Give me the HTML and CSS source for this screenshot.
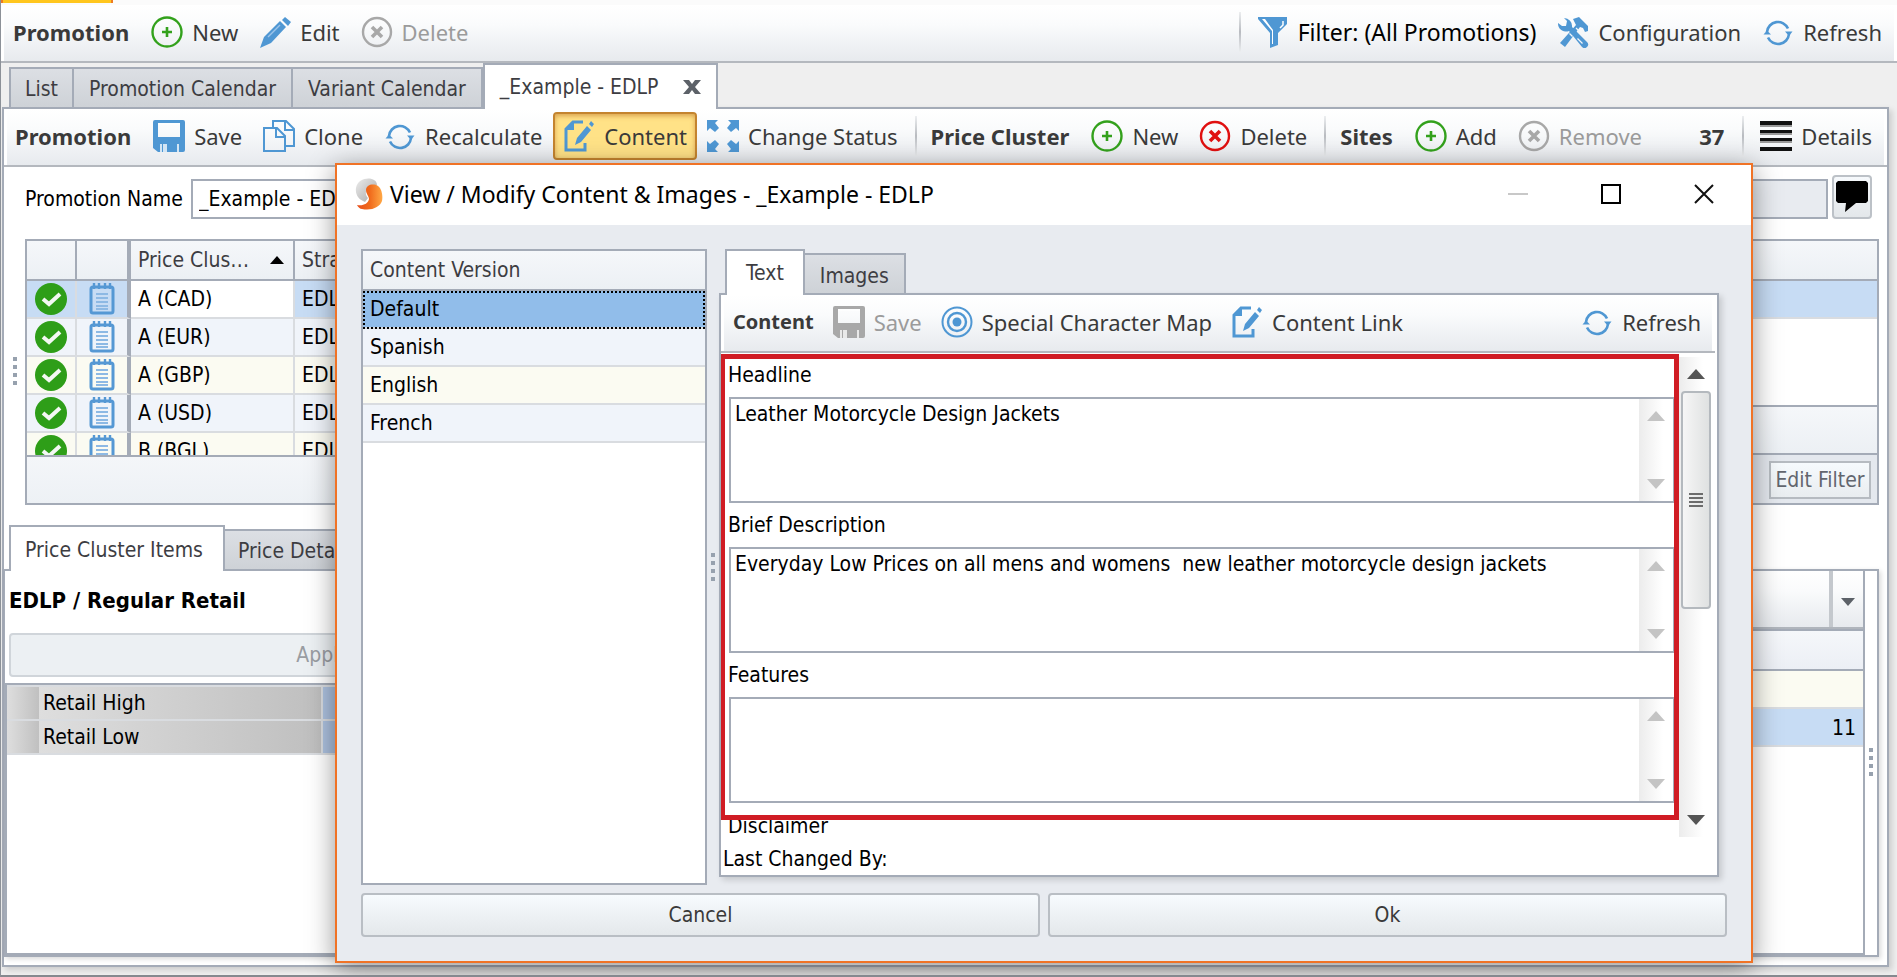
FILE: index.html
```html
<!DOCTYPE html>
<html lang="en">
<head>
<meta charset="utf-8">
<title>Promotion</title>
<link rel="stylesheet" href="styles.css">
</head>
<body>
<svg class="defs" aria-hidden="true">
  <symbol id="plus" viewBox="0 0 32 32"><circle cx="16" cy="16" r="14.5" fill="none" stroke="currentColor" stroke-width="2.4"/><path d="M16 11v10M11 16h10" stroke="currentColor" stroke-width="2.6"/></symbol>
  <symbol id="cross" viewBox="0 0 32 32"><circle cx="16" cy="16" r="14" fill="none" stroke="currentColor" stroke-width="2.4"/><path d="M11 11l10 10M21 11L11 21" stroke="currentColor" stroke-width="3.6"/></symbol>
  <symbol id="pencil" viewBox="0 0 32 32"><path d="M21 5l6 6-15 16-11 5 4-11z" fill="currentColor"/><path d="M9 21L21 9" stroke="#9cc4ea" stroke-width="1.4"/><path d="M23 4l3-3 6 5-3 4z" fill="currentColor"/></symbol>
  <symbol id="save" viewBox="0 0 32 32"><path fill-rule="evenodd" d="M2 0h28a2 2 0 0 1 2 2v28a2 2 0 0 1-2 2H5l-5-4V2a2 2 0 0 1 2-2zM5 3v14h22V3z" fill="currentColor"/><path d="M5 3h22v2H5z" fill="#fff" opacity=".5"/><path d="M7 24h2v8H7zM10 24h4v8h-4zM24 24h2v8h-2z" fill="#fff" opacity=".75"/></symbol>
  <symbol id="clone" viewBox="0 0 32 32"><path d="M10 8V1h13l8 8v17h-8M22 1v9h9" fill="none" stroke="currentColor" stroke-width="2"/><path d="M1 8h13l8 8v15H1zM13 8v9h9" fill="none" stroke="currentColor" stroke-width="2"/></symbol>
  <symbol id="refresh" viewBox="0 0 32 32"><path d="M5 16A11 11 0 0 1 26 12.500M27 18A11 11 0 0 1 6 21.500" fill="none" stroke="currentColor" stroke-width="2.600"/><path d="M1.500 18.500L5 14.500l4 4zM23 15.500l4 4.500 3.500-4.500z" fill="currentColor"/></symbol>
  <symbol id="compose" viewBox="0 0 32 32"><path d="M20 2H10L3 9v21h19v-7" fill="none" stroke="currentColor" stroke-width="3"/><path d="M3 10l8-8v8z" fill="currentColor"/><path d="M24 6l4 4-10 12-6 3 2-7zM26 4l2-3 3 3-2 3z" fill="currentColor"/></symbol>
  <symbol id="expand" viewBox="0 0 32 32"><path d="M0 0h11L8 3l4 5-4 4-5-4-3 3zM32 0v11l-3-3-5 4-4-4 4-5-3-3zM0 32V21l3 3 5-4 4 4-4 5 3 3zM32 32H21l3-3-4-5 4-4 5 4 3-3z" fill="currentColor"/></symbol>
  <symbol id="funnel" viewBox="0 0 32 32"><path d="M1 1h29v7l-9 9v12l-8 3V17L1 3z" fill="currentColor"/><path d="M5 3h3l8 11v14h-1V15z" fill="#fff"/><path d="M26 5v4l-3 3" fill="none" stroke="#fff" stroke-width="1.500"/></symbol>
  <symbol id="tools" viewBox="0 0 32 32"><path d="M1 7l4 3h4l1-5-3-3a8 8 0 0 1 8 9l15 15a3 3 0 0 1-5 5L12 15A8 8 0 0 1 1 7z" fill="currentColor"/><path d="M16 3l6-2 9 9v5l-3 1-2-4-3-1L8 31l-5-4L19 9z" fill="currentColor"/><path d="M12.500 17.500l3 3M19 12l2.500 2.500M20.500 22.500l5 5" stroke="#f3f6f9" stroke-width="1.300"/></symbol>
  <symbol id="bars" viewBox="0 0 32 32"><path d="M0 1h32v4H0zM0 10h32v3H0zM0 18h32v3H0zM0 27h32v4H0z" fill="#111"/><path d="M0 5h32v2H0zM0 13h32v2H0zM0 21h32v2H0z" fill="#999"/></symbol>
  <symbol id="target" viewBox="0 0 32 32"><g fill="none" stroke="currentColor"><circle cx="16" cy="16" r="14.500" stroke-width="2"/><circle cx="16" cy="16" r="9" stroke-width="2.400"/></g><circle cx="16" cy="16" r="4.500" fill="currentColor"/></symbol>
  <symbol id="check" viewBox="0 0 32 32"><circle cx="16" cy="16" r="16" fill="#2e9e18"/><path d="M8 16l6 5L25 11" fill="none" stroke="#f4f8f4" stroke-width="4"/></symbol>
  <symbol id="note" viewBox="0 0 32 32"><rect x="5" y="4" width="22" height="26" rx="2" fill="none" stroke="#5598d4" stroke-width="3"/><path d="M8 0v6M13 0v6M19 0v6M24 0v6" stroke="#5598d4" stroke-width="2.400"/><path d="M10 11h12M10 15h12M10 19h12M10 23h12M10 26h12" stroke="#8db9e4" stroke-width="2"/></symbol>
  <symbol id="up" viewBox="0 0 18 10"><path d="M9 0l9 10H0z" fill="currentColor"/></symbol>
  <symbol id="down" viewBox="0 0 18 10"><path d="M9 10L0 0h18z" fill="currentColor"/></symbol>
</svg>

<div class="ribbon"><span class="ribbon-tab"></span></div>

<header class="toolbar">
  <strong>Promotion</strong>
  <button class="tool"><svg class="green"><use href="#plus"/></svg>New</button>
  <button class="tool"><svg><use href="#pencil"/></svg>Edit</button>
  <button class="tool" disabled><svg><use href="#cross"/></svg>Delete</button>
  <span class="spacer"></span>
  <span class="sep"></span>
  <button class="tool filter"><svg><use href="#funnel"/></svg>Filter: (All Promotions)</button>
  <button class="tool"><svg><use href="#tools"/></svg>Configuration</button>
  <button class="tool"><svg><use href="#refresh"/></svg>Refresh</button>
</header>

<nav class="tabs main-tabs">
  <button class="tab">List</button>
  <button class="tab">Promotion Calendar</button>
  <button class="tab">Variant Calendar</button>
  <button class="tab active">_Example - EDLP <svg class="tab-close" viewBox="0 0 18 14"><path d="M0 0h6l3 4 3-4h6l-6 7 6 7h-6l-3-4-3 4H0l6-7z" fill="#5c6168"/></svg></button>
</nav>

<main class="page">
  <div class="toolbar">
    <strong>Promotion</strong>
    <button class="tool"><svg><use href="#save"/></svg>Save</button>
    <button class="tool"><svg><use href="#clone"/></svg>Clone</button>
    <button class="tool"><svg><use href="#refresh"/></svg>Recalculate</button>
    <button class="tool pressed"><svg><use href="#compose"/></svg>Content</button>
    <button class="tool"><svg><use href="#expand"/></svg>Change Status</button>
    <span class="sep"></span>
    <strong>Price Cluster</strong>
    <button class="tool"><svg class="green"><use href="#plus"/></svg>New</button>
    <button class="tool"><svg class="red"><use href="#cross"/></svg>Delete</button>
    <span class="sep"></span>
    <strong>Sites</strong>
    <button class="tool"><svg class="green"><use href="#plus"/></svg>Add</button>
    <button class="tool" disabled><svg><use href="#cross"/></svg>Remove</button>
    <span class="spacer"></span>
    <strong>37</strong>
    <span class="sep"></span>
    <button class="tool"><svg><use href="#bars"/></svg>Details</button>
  </div>

  <div class="name-row">
    <label for="promo-name">Promotion Name</label>
    <input id="promo-name" value="_Example - EDLP">
    <input class="readonly" aria-label="Comment" readonly>
    <button class="comment" aria-label="Comments"><svg viewBox="0 0 32 32"><path d="M2 0h28l2 2v18l-2 2H20L9 31l1-9H2l-2-2V2z"/></svg></button>
  </div>

  <section class="clusters">
    <span class="grip"><i></i><i></i><i></i><i></i></span>
    <div class="cluster-grid">
      <div class="grid-left">
        <div class="rows">
          <table>
            <thead><tr><th class="c1"></th><th class="c2"></th><th class="c3"><span>Price Clus…<svg class="sort"><use href="#up"/></svg></span></th><th>Strategy</th></tr></thead>
            <tbody>
              <tr class="selected"><td class="c1"><svg><use href="#check"/></svg></td><td class="c2"><svg><use href="#note"/></svg></td><td class="c3">A (CAD)</td><td>EDLP</td></tr>
              <tr><td class="c1"><svg><use href="#check"/></svg></td><td class="c2"><svg><use href="#note"/></svg></td><td class="c3">A (EUR)</td><td>EDLP</td></tr>
              <tr><td class="c1"><svg><use href="#check"/></svg></td><td class="c2"><svg><use href="#note"/></svg></td><td class="c3">A (GBP)</td><td>EDLP</td></tr>
              <tr><td class="c1"><svg><use href="#check"/></svg></td><td class="c2"><svg><use href="#note"/></svg></td><td class="c3">A (USD)</td><td>EDLP</td></tr>
              <tr><td class="c1"><svg><use href="#check"/></svg></td><td class="c2"><svg><use href="#note"/></svg></td><td class="c3">B (BGL)</td><td>EDLP</td></tr>
            </tbody>
          </table>
        </div>
        <div class="grid-foot"></div>
      </div>
      <div class="grid-right">
        <div class="g-head"></div>
        <div class="g-selected"></div>
        <div class="g-body"></div>
        <div class="g-summary"></div>
        <div class="g-filter"><button>Edit Filter</button></div>
      </div>
    </div>
  </section>

  <nav class="tabs detail-tabs">
    <button class="tab active">Price Cluster Items</button>
    <button class="tab">Price Details</button>
  </nav>

  <section class="details">
    <div class="retail">
      <h2>EDLP / Regular Retail</h2>
      <button class="apply" disabled>Apply</button>
      <div class="props">
        <div class="prop"><i></i><span>Retail High</span><b></b></div>
        <div class="prop"><i></i><span>Retail Low</span><b></b></div>
      </div>
    </div>
    <div class="items">
      <div class="items-grid">
        <div class="items-bar"><span></span><button aria-label="More"><svg><use href="#down"/></svg></button></div>
        <div class="items-head"></div>
        <div class="items-cream"></div>
        <div class="items-value">11</div>
      </div>
      <span class="grip"><i></i><i></i><i></i><i></i></span>
    </div>
  </section>
</main>

<div class="dialog" role="dialog" aria-labelledby="dialog-title">
  <div class="titlebar">
    <svg class="logo" viewBox="0 0 28 32"><defs><linearGradient id="lg" x1="0" y1="0" x2="1" y2="1"><stop offset="0" stop-color="#ececec"/><stop offset="1" stop-color="#a8a8a8"/></linearGradient><linearGradient id="lo" x1="0" y1="0" x2="1" y2="0"><stop offset="0" stop-color="#e8501c"/><stop offset=".5" stop-color="#f06a1c"/><stop offset="1" stop-color="#ffa845"/></linearGradient></defs><path d="M22 7C22-2 3-2 1 10c-1 7 3 12 9 14l3-4c-4-4-2-10 2-13z" fill="url(#lg)"/><path d="M11 12c0-5 7-7 12-4 4 3 5 10 4 15-2 6-10 10-20 8-2 0-4-2-5-4 6 1 11-1 12-6 0-3-3-5-3-9z" fill="url(#lo)"/></svg>
    <h1 id="dialog-title">View / Modify Content &amp; Images - _Example - EDLP</h1>
    <button aria-label="Minimize" disabled><svg viewBox="0 0 20 20"><path d="M0 10h20" stroke="#c8c8c8" stroke-width="2"/></svg></button>
    <button aria-label="Maximize"><svg viewBox="0 0 20 20"><path d="M1 1h18v18H1z" fill="none" stroke="#000" stroke-width="2"/></svg></button>
    <button aria-label="Close"><svg viewBox="0 0 20 20"><path d="M1 1l18 18M19 1L1 19" stroke="#111" stroke-width="2"/></svg></button>
  </div>
  <div class="dialog-body">
    <div class="split">
      <div class="versions">
        <table>
          <thead><tr><th>Content Version</th></tr></thead>
          <tbody>
            <tr class="current"><td>Default</td></tr>
            <tr><td>Spanish</td></tr>
            <tr class="cream"><td>English</td></tr>
            <tr><td>French</td></tr>
          </tbody>
        </table>
      </div>
      <span class="grip"><i></i><i></i><i></i><i></i></span>
      <div class="editor">
        <nav class="tabs editor-tabs">
          <button class="tab active">Text</button>
          <button class="tab">Images</button>
        </nav>
        <div class="editor-panel">
          <div class="toolbar">
            <strong>Content</strong>
            <button class="tool" disabled><svg><use href="#save"/></svg>Save</button>
            <button class="tool"><svg><use href="#target"/></svg>Special Character Map</button>
            <button class="tool"><svg><use href="#compose"/></svg>Content Link</button>
            <span class="spacer"></span>
            <button class="tool"><svg><use href="#refresh"/></svg>Refresh</button>
          </div>
          <div class="scroll-area">
            <div class="fields">
              <div class="marked">
                <label for="f1">Headline</label>
                <div class="memo"><textarea id="f1">Leather Motorcycle Design Jackets</textarea><span class="bar"><svg><use href="#up"/></svg><svg><use href="#down"/></svg></span></div>
                <label for="f2">Brief Description</label>
                <div class="memo"><textarea id="f2">Everyday Low Prices on all mens and womens  new leather motorcycle design jackets</textarea><span class="bar"><svg><use href="#up"/></svg><svg><use href="#down"/></svg></span></div>
                <label for="f3">Features</label>
                <div class="memo"><textarea id="f3"></textarea><span class="bar"><svg><use href="#up"/></svg><svg><use href="#down"/></svg></span></div>
              </div>
              <p class="next">Disclaimer</p>
            </div>
            <div class="bar outer"><svg><use href="#up"/></svg><span class="thumb"><i></i><i></i><i></i><i></i></span><svg><use href="#down"/></svg></div>
          </div>
          <p class="changed">Last Changed By:</p>
        </div>
      </div>
    </div>
    <div class="actions">
      <button>Cancel</button>
      <button>Ok</button>
    </div>
  </div>
</div>
</body>
</html>
```
FILE: styles.css
```css
* { box-sizing: border-box; }
:root {
  --line: #a4abb7;
  --soft: #d9dce0;
  --blue: #4f97d3;
  --row: #f0f4fa;
  --cream: #fbfbf2;
  --pick: #c7dcf4;
  --ui: "DejaVu Sans Condensed", "DejaVu Sans", sans-serif;
  --bar: "Noto Sans", "Open Sans", sans-serif;
}
html, body { height: 100%; }
body {
  margin: 0;
  position: relative;
  display: flex;
  flex-direction: column;
  overflow: hidden;
  background: #efefef;
  border-left: 1px solid #8c9198;
  border-bottom: 2px solid #85898f;
  font: 21px/26px var(--ui);
  color: #000;
}
button, input, textarea { font: inherit; color: inherit; margin: 0; }
button { background: none; border: 0; padding: 0; }
.defs { position: absolute; width: 0; height: 0; }
table { border-collapse: separate; border-spacing: 0; }

.ribbon { flex: none; height: 5px; background: #fbfbfb; }
.ribbon-tab { display: block; width: 112px; height: 3px; background: #ffc61e; border: solid #ee7b22; border-width: 0 2px; }

.toolbar {
  flex: none;
  display: flex;
  align-items: center;
  height: 58px;
  border: solid #b4b8be;
  border-width: 0 0 2px;
  background: linear-gradient(#fff 0%, #fafbfc 35%, #e7eaee 100%);
  box-shadow: inset 3px 0 #fff, inset -3px 0 #fff;
  font-family: var(--bar);
  font-size: 22px;
  line-height: 30px;
  color: #3a3a3a;
  padding: 0 4px 2px;
  white-space: nowrap;
}
.toolbar strong { padding: 0 12px 0 8px; font-weight: 700; }
.tool { display: flex; align-items: center; gap: 9px; height: 48px; padding: 0 11px 0 10px; }
.tool svg { width: 32px; height: 32px; color: var(--blue); }
.tool svg.green { color: #33a11c; }
.tool svg.red { color: #e01010; }
.tool:disabled { color: #9b9b9b; }
.tool:disabled svg { color: #a8a8a8; }
.tool.filter { color: #000; font-size: 23px; }
.tool.pressed { border: 2px solid #c4842f; border-radius: 4px; background: #ffe287; box-shadow: inset 0 2px 5px #d9a24f; padding: 0 8px; }
.spacer { flex: 1; }
.sep { width: 2px; height: 40px; margin: 0 6px; background: linear-gradient(#eceef0, #b8bbc0, #eceef0); }

.tabs { flex: none; display: flex; align-items: flex-end; color: #3d3d42; }
.tab {
  color: inherit;
  height: 42px;
  padding: 2px 14px 0;
  border: 2px solid var(--line);
  background: linear-gradient(#dcdfe4, #ced2d7);
}
.tab + .tab { border-left-width: 0; padding: 2px 15px 0; }
.tab.active { background: #fff; border-bottom: 0; height: 46px; }
.main-tabs { padding-left: 8px; height: 46px; position: relative; }
.main-tabs .tab.active { border-left-width: 2px; display: flex; align-items: center; padding-top: 0; }
.tab-close { width: 18px; height: 14px; margin-left: 25px; }

.page {
  flex: 1;
  min-height: 0;
  display: flex;
  flex-direction: column;
  margin: -2px 8px 8px 1px;
  border: 2px solid var(--line);
  background: #fff;
  box-shadow: 3px 3px 6px rgba(0, 0, 0, .15);
}
.page > .toolbar { padding-left: 3px; }

.name-row { display: flex; align-items: flex-end; padding: 8px 15px 8px 21px; height: 60px; gap: 4px; }
.name-row label { width: 162px; line-height: 40px; white-space: nowrap; }
.name-row input { flex: 1; min-width: 0; height: 40px; border: 2px solid var(--line); padding: 0 6px; background: #fff; }
.name-row .readonly { background: #e8ebf0; }
.comment { width: 40px; height: 44px; border: 2px solid #bcc1c7; border-radius: 4px; background: linear-gradient(#f6f9fc, #e3e7ea); display: grid; place-items: center; }
.comment svg { width: 34px; height: 32px; }

.grip { display: flex; flex-direction: column; justify-content: center; align-items: center; gap: 4px; }
.grip i { width: 4px; height: 4px; background: #97a1ae; }
.clusters { flex: none; display: flex; padding: 12px 8px 0 0; height: 278px; }
.clusters .grip { width: 21px; padding-bottom: 2px; }
.cluster-grid { flex: 1; display: flex; border: 2px solid var(--line); min-width: 0; }
.grid-left, .grid-right { flex: 1; display: flex; flex-direction: column; min-width: 0; }
.rows { height: 214px; overflow: hidden; }
.rows table { width: 100%; table-layout: fixed; }
.rows th, .rows td { text-align: left; font-weight: 400; white-space: nowrap; padding: 0 7px; border: solid var(--soft); border-width: 0 2px 2px 0; height: 38px; }
.rows th { height: 40px; border-color: var(--line); background: linear-gradient(#f5f7fa, #ecf0f4); color: #3d3d42; }
.rows .c1 { width: 50px; text-align: center; padding: 0; }
.rows .c2 { width: 54px; text-align: center; padding: 0; border-right: 4px solid var(--line); }
.rows .c3 { width: 164px; }
.rows th span { display: flex; align-items: center; justify-content: space-between; }
.rows td svg { width: 32px; height: 32px; display: block; margin: 0 auto; }
.rows .sort { width: 14px; height: 8px; margin-right: 2px; color: #000; }
.rows tr:nth-child(even) td { background: var(--row); }
.rows tr:nth-child(odd) td { background: var(--cream); }
.rows tr.selected td { background: var(--pick); }
.rows tr.selected .c3 { background: #fff; }
.grid-foot { flex: 1; border-top: 2px solid var(--line); background: linear-gradient(#f4f6f9, #edf1f5); }
.g-head { height: 38px; background: linear-gradient(#f5f7fa, #ecf0f4); }
.g-selected { height: 40px; border: solid var(--line); border-width: 2px 0 0; background: var(--pick); border-bottom: 2px solid var(--soft); }
.g-body { flex: 1; }
.g-summary { height: 50px; border: solid var(--line); border-width: 2px 0; background: linear-gradient(#f5f7fa, #ecf0f4); }
.g-filter { height: 48px; background: #e4e8ee; display: flex; justify-content: flex-end; align-items: center; padding: 2px 6px 0 0; }
.g-filter button { height: 38px; width: 102px; border: 2px solid #b6bbc1; background: linear-gradient(#f6fafd, #e9edf0); color: #62666e; white-space: nowrap; display: flex; justify-content: center; align-items: center; }

.detail-tabs { margin-top: 20px; padding-left: 5px; position: relative; }
.detail-tabs .tab.active { width: 216px; text-align: left; }
.detail-tabs .tab + .tab { padding-left: 13px; }
.details { flex: 1; min-height: 0; display: flex; justify-content: space-between; margin: -2px 8px 8px 0; border: 2px solid var(--line); border-left-width: 1px; box-shadow: 2px 2px 5px rgba(0, 0, 0, .15); }
.retail { width: 50%; display: flex; flex-direction: column; }
h2 { margin: 16px 0 18px 4px; font: 700 22px/28px var(--ui); }
.apply { margin-left: 4px; width: 628px; height: 44px; flex: none; border: 2px solid #d0d5da; border-radius: 4px; background: #ecf0f3; color: #9a9da2; }
.props { flex: 1; margin-top: 6px; border: solid var(--line); border-width: 2px 0 2px 2px; }
.prop { display: grid; grid-template-columns: 32px 282px 1fr; height: 34px; border-top: 2px solid var(--soft); }
.prop:last-child { height: 36px; border-bottom: 2px solid var(--soft); }
.prop i { background: linear-gradient(90deg, #dedede, #c0c0c0); }
.prop span { padding: 3px 4px 0; background: linear-gradient(90deg, #dedede, #bfbfbf); }
.prop b { border-left: 2px solid var(--soft); background: #adc2e0; }
.items { flex: 1; display: flex; }
.items-grid { flex: 1; border: solid var(--line); border-width: 0 2px 2px 0; }
.items .grip { width: 12px; padding-bottom: 2px; }
.items-bar { height: 58px; display: grid; grid-template-columns: 1fr 30px; background: linear-gradient(#fff, #fafbfc 35%, #e7eaee); border-bottom: 2px solid #b0b5bc; }
.items-bar span { border-right: 4px solid #c4c8cd; }
.items-bar svg { width: 14px; height: 8px; color: #5c6168; }
.items-head { height: 42px; border: solid var(--line); border-width: 2px 0; background: linear-gradient(#f5f7fa, #eceff5); }
.items-cream { height: 38px; background: var(--cream); border-bottom: 2px solid var(--soft); }
.items-value { height: 38px; background: var(--pick); border-bottom: 2px solid var(--soft); text-align: right; padding: 6px 7px 0; }

.dialog {
  position: absolute;
  inset: 163px 144px 12px 334px;
  display: flex;
  flex-direction: column;
  border: 2px solid #f07326;
  background: #e8ebf0;
  box-shadow: 0 6px 26px rgba(0, 0, 0, .42);
}
.titlebar { flex: none; display: flex; align-items: center; height: 60px; background: #fff; padding: 0 37px 2px 18px; gap: 73px; }
.logo { width: 28px; height: 32px; margin-right: -66px; }
h1 { flex: 1; margin: 0; font: 400 23px/32px var(--bar); white-space: nowrap; }
.titlebar svg { display: block; }
.titlebar button svg { width: 20px; height: 20px; }
.dialog-body { flex: 1; min-height: 0; display: flex; flex-direction: column; padding: 24px; gap: 8px; }
.split { flex: 1; min-height: 0; display: flex; }
.versions { width: 346px; flex: none; border: 2px solid var(--line); background: #fff; }
.versions table { width: 100%; }
.versions th, .versions td { text-align: left; font-weight: 400; height: 38px; padding: 0 7px; border-bottom: 2px solid var(--soft); background: var(--row); }
.versions th { height: 40px; color: #3d3d42; border-color: var(--line); background: linear-gradient(#f5f7fa, #ecf0f4); }
.versions .cream td { background: var(--cream); }
.versions .current td { background: #91bdea; outline: 2px dotted #000; outline-offset: -2px; }
.split > .grip { width: 12px; padding-bottom: 0; }
.editor { flex: 1; min-width: 0; display: flex; flex-direction: column; padding: 0 8px 8px 0; }
.editor-tabs { padding-left: 6px; position: relative; }
.editor-tabs .tab { padding: 4px 15px 0; }
.editor-tabs .tab.active { padding: 0 19px; }
.editor-panel { flex: 1; min-height: 0; margin-top: -2px; display: flex; flex-direction: column; border: 2px solid var(--line); background: #fff; box-shadow: 3px 3px 6px rgba(0, 0, 0, .15); }
.editor-panel > .toolbar { padding: 0 4px 2px; margin-right: 2px; }
.editor-panel .toolbar strong { font-size: 20px; padding-right: 10px; }
.editor-panel .tool { padding: 0 10px 0 9px; }
.scroll-area { flex: 1; min-height: 0; display: flex; padding-top: 1px; overflow: hidden; }
.fields { flex: 1; min-width: 0; }
.marked { border: 5px solid #d01c24; height: 466px; padding: 0 0 0 4px; margin-left: -1px; position: relative; z-index: 1; }
.marked label { display: block; height: 38px; padding-top: 3px; margin-left: -1px; }
.memo { display: flex; height: 106px; border: 2px solid var(--line); border-right-width: 1px; margin-bottom: 6px; }
.memo textarea { flex: 1; border: 0; resize: none; padding: 2px 4px; background: #fff; white-space: pre-wrap; overflow: hidden; outline: 0; }
.bar { width: 34px; flex: none; display: flex; flex-direction: column; justify-content: space-between; align-items: center; padding: 12px 0; background: linear-gradient(90deg, #ececec, #fff 70%); color: #c4c4c4; }
.bar svg { width: 18px; height: 10px; }
.outer { width: 34px; margin: 3px 4px 0 0; color: #555; justify-content: flex-start; height: 480px; padding-bottom: 12px; }
.thumb { width: 30px; height: 218px; margin: 12px 0 auto; border: 2px solid #b4b9be; border-radius: 4px; background: linear-gradient(90deg, #f6f6f6, #dfe1e1); display: flex; flex-direction: column; justify-content: center; align-items: center; gap: 2px; }
.thumb i { width: 14px; height: 2px; background: #6c6c6c; }
.next, .changed { margin: 0; }
.next { padding: 0 7px; height: 20px; line-height: 12px; }
.changed { flex: none; padding: 1px 2px 0; height: 30px; }
.actions { flex: none; display: grid; grid-template-columns: 1fr 1fr; gap: 8px; }
.actions button { height: 44px; border: 2px solid #b9bec4; border-radius: 4px; background: linear-gradient(#f7fbfe, #e4e8eb); color: #3a3a3a; }
```
